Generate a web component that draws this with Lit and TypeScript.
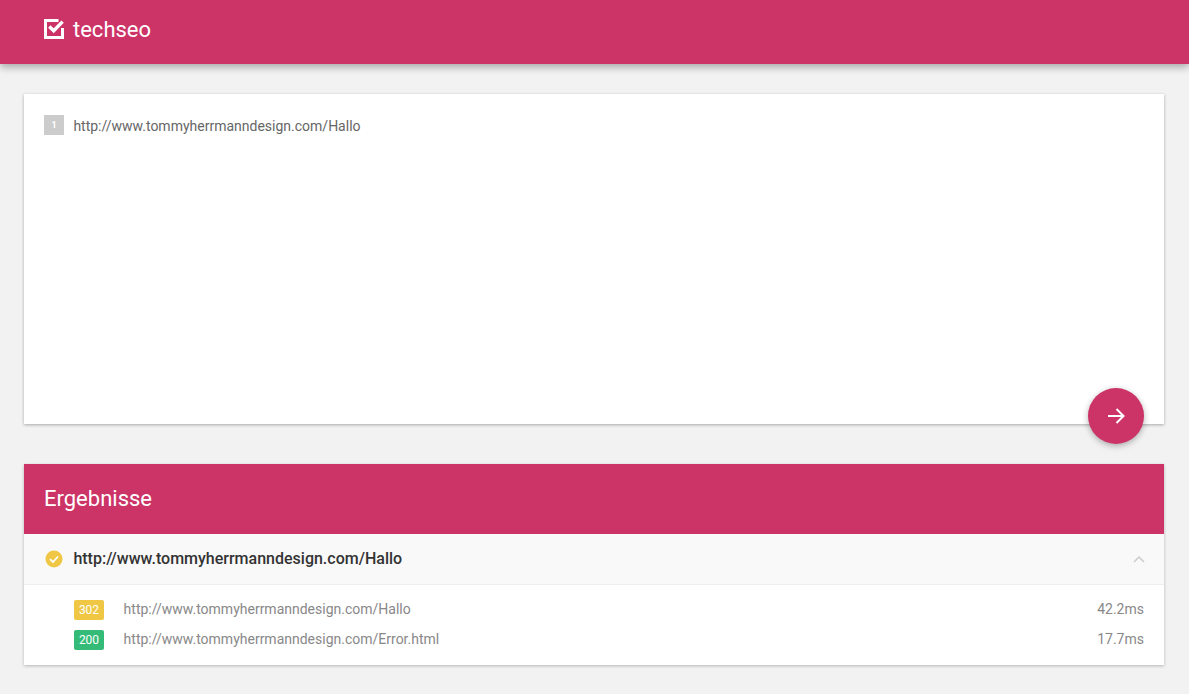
import { LitElement, html, css } from "lit";
import { customElement } from "lit/decorators.js";

@customElement("app-root")
export class AppRoot extends LitElement {
  static styles = css`
    :host { display: block; background: #f2f2f2; font-family: Roboto, "Liberation Sans", sans-serif; overflow: hidden; height: 694px; }
    * { box-sizing: border-box; }
    .top { height: 64px; background: #cc3366; color: #fff; display: flex; align-items: center; padding: 0 44px 6px; gap: 9px; box-shadow: 0 3px 8px rgba(0,0,0,.32); position: relative; }
    .top svg { width: 20px; height: 20px; display: block; }
    .brand { font-size: 22px; line-height: 30px; margin-top: 1px; }
    main { padding: 30px 25px 0 24px; display: flex; flex-direction: column; gap: 40px; }
    .editor { height: 330px; background: #fff; box-shadow: 0 1px 3px rgba(0,0,0,.3); padding: 21px 20px; position: relative; }
    .line { display: flex; align-items: center; gap: 9px; height: 20px; }
    .num { width: 20px; height: 20px; background: #ccc; color: #fff; font-size: 9px; font-weight: 700; display: flex; align-items: center; justify-content: center; }
    .url { font-size: 14px; color: #666; padding-top: 2px; margin-left: 0.4px; }
    .fab { position: absolute; right: 20px; bottom: -20px; width: 56px; height: 56px; border-radius: 50%; background: #cc3366; border: 0; padding: 0; display: flex; align-items: center; justify-content: center; box-shadow: 0 2px 6px rgba(0,0,0,.3); }
    .fab svg { width: 18px; height: 18px; }
    .results { background: #fff; box-shadow: 0 1px 3px rgba(0,0,0,.25); }
    .rhead { height: 70px; background: #cc3366; color: #fff; font-size: 22px; display: flex; align-items: center; padding: 0 20px 1px; }
    .sum { height: 51px; background: #f9f9f9; border-bottom: 1px solid #eee; display: flex; align-items: center; padding: 0 20px 0 21px; }
    .sum .check { width: 18px; height: 18px; margin-right: 10px; }
    .sum .t { flex: 1; font-size: 16px; font-weight: 500; color: #333; padding-bottom: 2px; margin-left: 0.4px; }
    .sum .chev { width: 12px; height: 8px; margin-right: -1px; }
    .rows { padding: 15px 20px 15px 50px; display: flex; flex-direction: column; gap: 10px; }
    .row { display: flex; align-items: center; height: 20px; font-size: 14px; color: #888; }
    .badge { width: 30px; height: 20px; border-radius: 2px; color: #fff; font-size: 12px; display: flex; align-items: center; justify-content: center; margin-right: 19.6px; }
    .y { background: #efc744; }
    .g { background: #33bb77; }
    .row .u { flex: 1; }
    .row span:not(.badge) { margin-top: -2px; }
    .check circle { fill: #efc744; }
  `;
  render() {
    return html`
      <header class="top">
        <svg viewBox="0 0 20 20" fill="none"><path d="M14.5 1.5H1.5V18.5H18.5V9" stroke="#fff" stroke-width="3"/><path d="M5.3 7.5L9.7 11.8L18.6 2.6" stroke="#fff" stroke-width="3.4"/></svg>
        <span class="brand">techseo</span>
      </header>
      <main>
        <section class="editor">
          <div class="line"><span class="num">1</span><span class="url">http://www.tommyherrmanndesign.com/Hallo</span></div>
          <button class="fab"><svg viewBox="0 0 18 18" fill="none" stroke="#fff" stroke-width="2"><path d="M1 9H16.5M9.5 2L16.5 9L9.5 16"/></svg></button>
        </section>
        <section class="results">
          <div class="rhead">Ergebnisse</div>
          <div class="sum">
            <svg class="check" viewBox="0 0 18 18"><circle cx="9" cy="9" r="8.5"/><path d="M5 9.2L8 12L13 6.5" fill="none" stroke="#fff" stroke-width="1.8"/></svg>
            <span class="t">http://www.tommyherrmanndesign.com/Hallo</span>
            <svg class="chev" viewBox="0 0 12 8" fill="none" stroke="#ccc" stroke-width="1.5"><path d="M1 7L6 2L11 7"/></svg>
          </div>
          <div class="rows">
            <div class="row"><span class="badge y">302</span><span class="u">http://www.tommyherrmanndesign.com/Hallo</span><span>42.2ms</span></div>
            <div class="row"><span class="badge g">200</span><span class="u">http://www.tommyherrmanndesign.com/Error.html</span><span>17.7ms</span></div>
          </div>
        </section>
      </main>
    `;
  }
}
